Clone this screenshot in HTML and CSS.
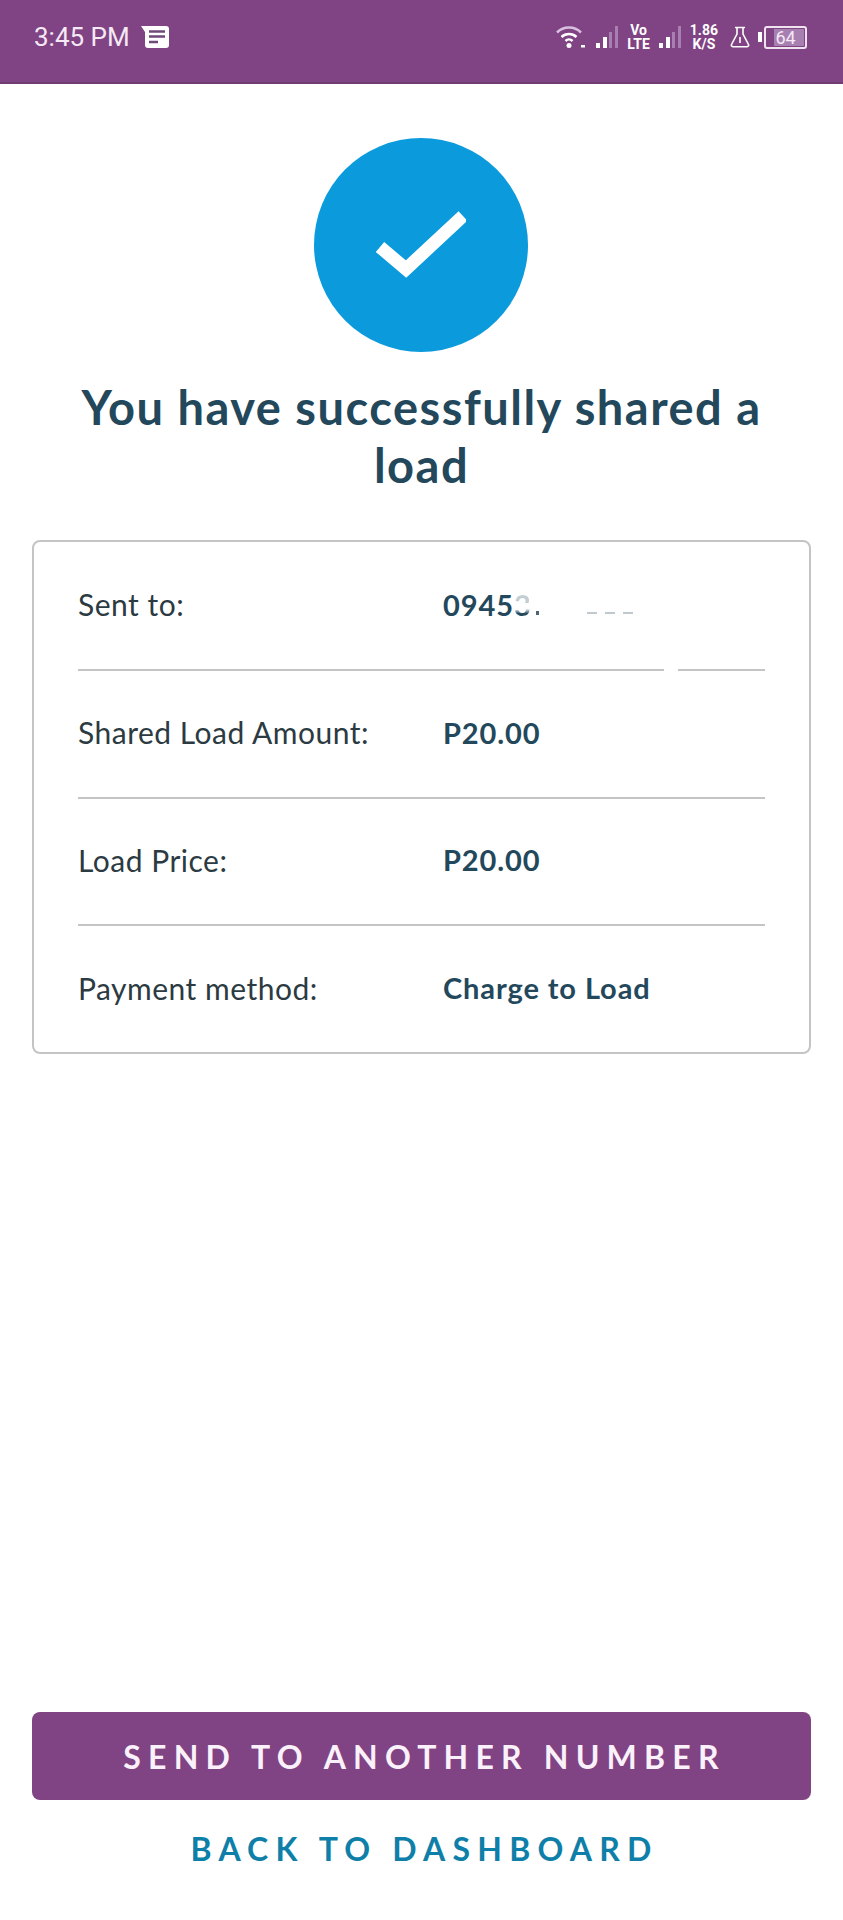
FILE: index.html
```html
<!DOCTYPE html>
<html lang="en">
<head>
    <meta charset="UTF-8">
    <title>Share a Load</title>
    <link rel="stylesheet" href="styles.css">
</head>
<body>
    <div class="status-bar">
        <div class="status-left">
            <span class="clock">3:45 PM</span>
            <svg class="msg-icon" width="30" height="24" viewBox="0 0 30 24">
                <path d="M1 1H26a3 3 0 0 1 3 3V20a3 3 0 0 1-3 3H8a3 3 0 0 1-3-3V7Z" fill="#fff"/>
                <path d="M9 6.500H25M9 11.500H25M9 17H18" stroke="#6f4a78" stroke-width="2.400" fill="none"/>
            </svg>
        </div>
        <div class="status-right">
            <svg width="32" height="26" viewBox="0 0 32 26">
                <path d="M2 8.500a17 17 0 0 1 24 0" stroke="#d9bfe0" stroke-width="2.500" fill="none"/>
                <path d="M6.500 13a11 11 0 0 1 15 0" stroke="#fff" stroke-width="2.500" fill="none"/>
                <path d="M10.500 17a5 5 0 0 1 7 0" stroke="#fff" stroke-width="2.500" fill="none"/>
                <circle cx="14" cy="21.500" r="2.500" fill="#fff"/>
                <rect x="26" y="21" width="4" height="2.500" fill="#fff"/>
            </svg>
            <svg class="bars" width="24" height="24" viewBox="0 0 24 24">
                <rect x="1" y="18" width="4" height="5" fill="#fff"/>
                <rect x="8" y="12" width="4" height="11" fill="#fff"/>
                <rect x="14" y="7" width="3" height="16" fill="#a77fb0"/>
                <rect x="20" y="1" width="3" height="22" fill="#a77fb0"/>
            </svg>
            <span class="volte">Vo<br>LTE</span>
            <svg class="bars" width="24" height="24" viewBox="0 0 24 24">
                <rect x="1" y="18" width="4" height="5" fill="#fff"/>
                <rect x="8" y="12" width="4" height="11" fill="#fff"/>
                <rect x="14" y="7" width="3" height="16" fill="#a77fb0"/>
                <rect x="20" y="1" width="3" height="22" fill="#a77fb0"/>
            </svg>
            <span class="speed">1.86<br>K/S</span>
            <svg class="flask" width="20" height="22" viewBox="0 0 20 22">
                <path d="M5 1.500H15M7 1.500V8L1.500 18.500a1.500 1.500 0 0 0 1.300 2.200H17.200a1.500 1.500 0 0 0 1.300-2.200L13 8V1.500" stroke="#fff" stroke-width="1.600" fill="none"/>
                <path d="M10 11V17" stroke="#fff" stroke-width="1.600"/>
            </svg>
            <div class="battery-wrap">
                <span class="battery-nub"></span>
                <div class="battery">
                    <span class="battery-level"></span>
                    <span class="battery-text">64</span>
                </div>
            </div>
        </div>
    </div>

    <main class="content">
        <div class="check-circle">
            <svg width="90" height="70" viewBox="0 0 90 70">
                <path d="M4 37L30 59L87 6" stroke="#fff" stroke-width="13" fill="none"/>
            </svg>
        </div>
        <h1 class="title">You have successfully shared a load</h1>

        <section class="card">
            <div class="row row-first">
                <span class="label">Sent to:</span>
                <span class="value">0945<span class="masked">3</span></span>
                <span class="smudge smudge-dot"></span>
                <span class="smudge"></span>
                <span class="smudge"></span>
                <span class="smudge"></span>
            </div>
            <div class="rule rule-gap"><span class="rule-long"></span><span class="rule-short"></span></div>
            <div class="row">
                <span class="label">Shared Load Amount:</span>
                <span class="value">P20.00</span>
            </div>
            <div class="rule"></div>
            <div class="row">
                <span class="label">Load Price:</span>
                <span class="value">P20.00</span>
            </div>
            <div class="rule"></div>
            <div class="row row-last">
                <span class="label">Payment method:</span>
                <span class="value">Charge to Load</span>
            </div>
        </section>
    </main>

    <div class="actions">
        <button class="btn-primary">SEND TO ANOTHER NUMBER</button>
        <button class="btn-link">BACK TO DASHBOARD</button>
    </div>
</body>
</html>
```

FILE: styles.css
```css
* {
    box-sizing: border-box;
}
body {
    margin: 0;
    height: 1920px;
    display: flex;
    flex-direction: column;
    background-color: #fff;
    font-family: "Lato", "Open Sans", sans-serif;
    color: #2a4a5c;
}
.status-bar {
    height: 84px;
    flex-shrink: 0;
    padding: 0 36px 8px 34px;
    display: flex;
    justify-content: space-between;
    align-items: center;
    background-color: #804383;
    border-bottom: 2px solid #6e3d72;
    color: #fff;
}
.status-left, .status-right {
    display: flex;
    align-items: center;
}
.clock {
    font-family: "Roboto", sans-serif;
    font-size: 26px;
    color: #f5e9f5;
}
.msg-icon {
    margin-left: 10px;
}
.status-right {
    gap: 8px;
}
.volte, .speed {
    font-family: "Roboto", sans-serif;
    font-size: 14px;
    font-weight: 700;
    line-height: 14px;
    text-align: center;
}
.flask {
    margin-left: 4px;
}
.battery-wrap {
    display: flex;
    align-items: center;
}
.battery-nub {
    width: 4px;
    height: 10px;
    background-color: #fff;
    margin-right: 2px;
}
.battery {
    position: relative;
    width: 43px;
    height: 23px;
    border: 2px solid #f0e3f0;
    border-radius: 3px;
    display: flex;
    align-items: center;
    justify-content: center;
}
.battery-level {
    position: absolute;
    top: 1px;
    bottom: 1px;
    right: 1px;
    width: 30px;
    background-color: #a77fb0;
}
.battery-text {
    position: relative;
    font-family: "Roboto", sans-serif;
    font-size: 18px;
    color: #f5e9f5;
}
.content {
    flex: 1;
    padding: 0 32px;
    display: flex;
    flex-direction: column;
    align-items: center;
}
.check-circle {
    width: 214px;
    height: 214px;
    margin: 54px 1px 0 0;
    border-radius: 50%;
    background-color: #0b9bdc;
    display: flex;
    align-items: center;
    justify-content: center;
}
.title {
    margin: 26px 0 0;
    width: 720px;
    font-size: 47px;
    font-weight: 700;
    line-height: 58px;
    letter-spacing: 1.500px;
    text-align: center;
    color: #23485c;
}
.card {
    width: 100%;
    margin-top: 46px;
    padding: 0 44px;
    border: 2px solid #c4c4c4;
    border-radius: 8px;
}
.row {
    height: 125.500px;
    padding-bottom: 3px;
    display: flex;
    align-items: center;
    font-size: 30px;
    letter-spacing: 0.500px;
}
.row-first {
    height: 127px;
}
.row-last {
    height: 126px;
}
.label {
    width: 365px;
    color: #2c3a42;
}
.value {
    font-size: 29px;
    font-weight: 700;
    letter-spacing: 0.900px;
    color: #23485c;
}
.masked {
    display: inline-block;
    background: linear-gradient(#c3ced4 45%, #fff 45%, #fff 62%, #23485c 76%);
    -webkit-background-clip: text;
    background-clip: text;
    color: transparent;
}
.smudge {
    width: 10px;
    height: 2px;
    margin: 18px 0 0 8px;
    background-color: #bfc8cd;
}
.smudge-dot {
    width: 3px;
    height: 4px;
    margin-left: 4px;
    margin-right: 40px;
    background-color: #4a6573;
}
.rule {
    height: 2px;
    background-color: #c4c4c4;
}
.rule-gap {
    display: flex;
    justify-content: space-between;
    background: none;
}
.rule-long {
    width: 586px;
    background-color: #c4c4c4;
}
.rule-short {
    width: 87px;
    background-color: #c4c4c4;
}
.actions {
    padding: 0 32px 42px;
    display: flex;
    flex-direction: column;
    align-items: center;
}
.btn-primary {
    width: 100%;
    height: 88px;
    padding-left: 12px;
    border: none;
    border-radius: 8px;
    background-color: #804383;
    color: #fbf1fb;
    font-family: "Lato", "Open Sans", sans-serif;
    font-size: 32px;
    font-weight: 700;
    letter-spacing: 7.200px;
}
.btn-link {
    margin-top: 18px;
    height: 60px;
    padding-left: 12px;
    border: none;
    background: none;
    color: #0e7fa8;
    font-family: "Lato", "Open Sans", sans-serif;
    font-size: 32px;
    font-weight: 700;
    letter-spacing: 7.200px;
}
```
